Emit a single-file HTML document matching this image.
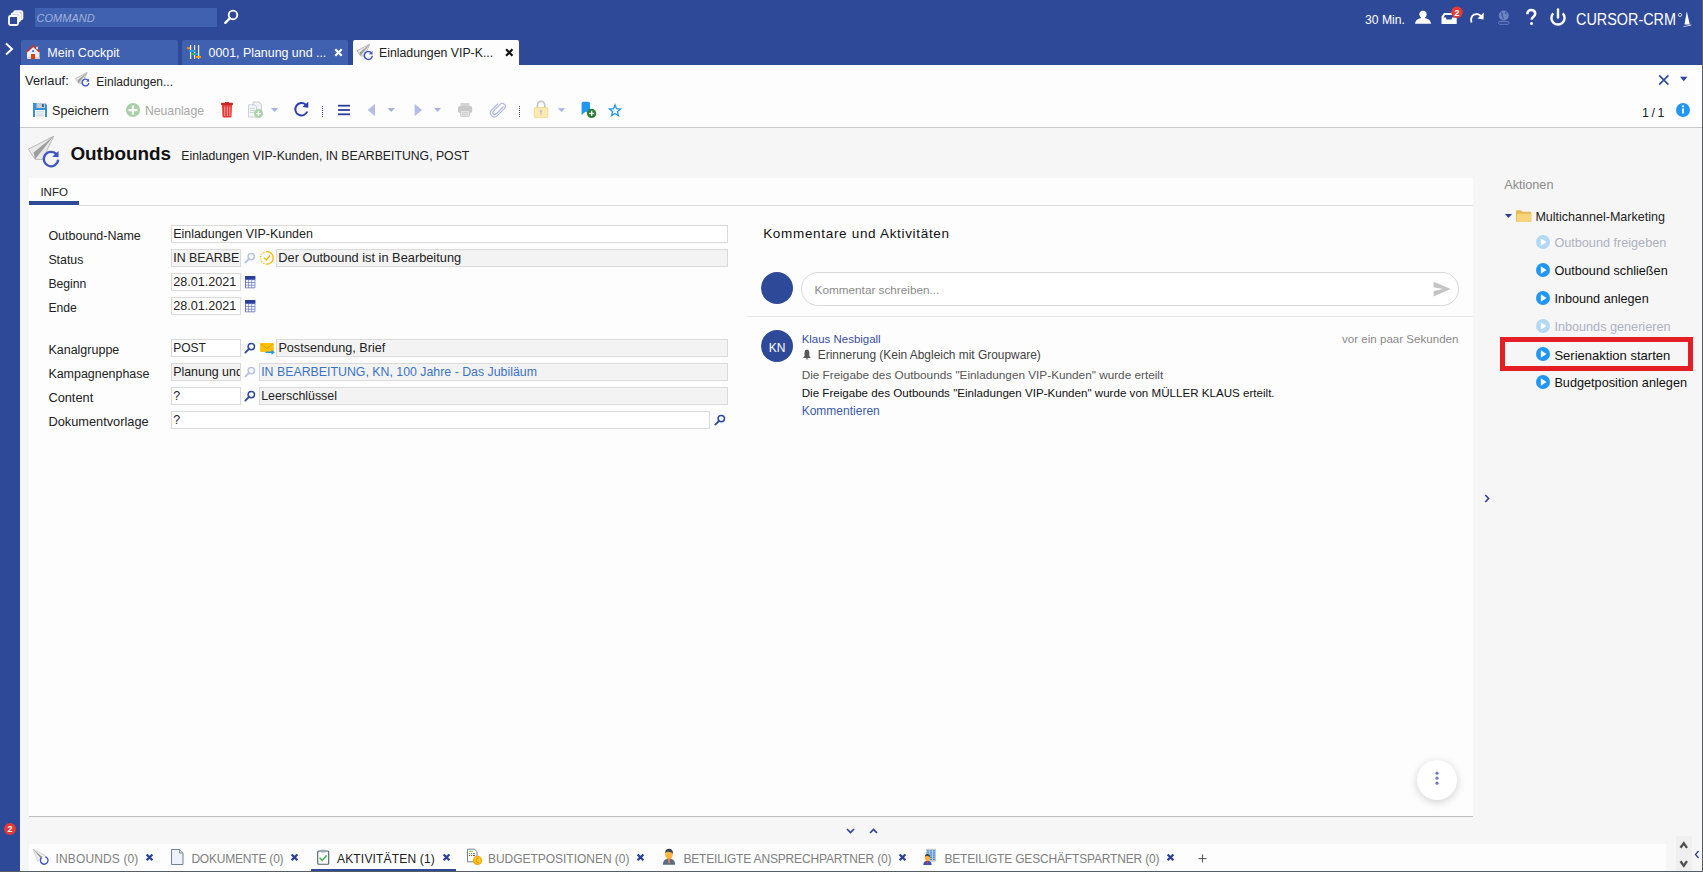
<!DOCTYPE html>
<html><head><meta charset="utf-8"><style>
html,body{margin:0;padding:0;width:1703px;height:872px;overflow:hidden;background:#f6f6f6}
body{position:relative;font-family:'Liberation Sans', sans-serif}
.t{position:absolute;white-space:pre;line-height:1;font-family:'Liberation Sans', sans-serif}
svg{overflow:visible}
</style></head><body>
<div style="position:absolute;left:0px;top:0px;width:1703px;height:65px;background:#2e4998"></div><div style="position:absolute;left:0px;top:65px;width:20px;height:807px;background:#2e4998"></div><div style="position:absolute;left:20px;top:65px;width:1683px;height:63px;background:#fdfdfd"></div><div style="position:absolute;left:20px;top:127px;width:1683px;height:1px;background:#c9c9c9"></div><div style="position:absolute;left:20px;top:128px;width:1683px;height:744px;background:#f6f6f6"></div><div style="position:absolute;left:29px;top:178px;width:1444px;height:638px;background:#fdfdfd"></div><div style="position:absolute;left:29px;top:816px;width:1444px;height:1px;background:#bdbdbd"></div><div style="position:absolute;left:29px;top:844px;width:1637px;height:27px;background:#fdfdfd"></div><div style="position:absolute;left:1676px;top:836px;width:16px;height:35px;background:#efefef"></div><div style="position:absolute;left:1702px;top:0px;width:1px;height:872px;background:#585c63"></div><div style="position:absolute;left:0px;top:871px;width:1703px;height:1px;background:#585c63"></div><div style="position:absolute;left:35px;top:8px;width:182px;height:19px;background:#4060b0"></div><div class="t" style="left:36.6px;top:12.69px;font-size:11px;color:#9fb0dc;font-style:italic">COMMAND</div><div class="t" style="left:1365px;top:13.67px;font-size:12.2px;color:#fff;">30 Min.</div><div class="t" style="left:1575.7px;top:12.06px;font-size:16px;color:#fff;transform:scaleX(0.9);transform-origin:left">CURSOR-CRM</div><div style="position:absolute;left:21px;top:40px;width:157px;height:25px;background:#4060b0;border-radius:2px 2px 0 0"></div><div style="position:absolute;left:182px;top:40px;width:166px;height:25px;background:#4060b0;border-radius:2px 2px 0 0"></div><div style="position:absolute;left:353px;top:40px;width:166px;height:25px;background:#fdfdfd;border-radius:2px 2px 0 0"></div><div class="t" style="left:47.3px;top:46.82px;font-size:12.5px;color:#fff;">Mein Cockpit</div><div class="t" style="left:208.5px;top:46.90px;font-size:12.4px;color:#fff;">0001, Planung und ...</div><div class="t" style="left:379px;top:46.99px;font-size:12.3px;color:#222;">Einladungen VIP-K...</div><div class="t" style="left:25px;top:74.88px;font-size:12.9px;color:#222;">Verlauf:</div><div class="t" style="left:96.3px;top:75.64px;font-size:12.0px;color:#222;">Einladungen...</div><div class="t" style="left:52px;top:105.13px;font-size:12.6px;color:#222;">Speichern</div><div class="t" style="left:145px;top:105.47px;font-size:12.2px;color:#a8a8a8;">Neuanlage</div><div class="t" style="left:1642px;top:106.50px;font-size:12.4px;color:#222;letter-spacing:2.6px">1/1</div><div class="t" style="left:70.4px;top:144.60px;font-size:18.9px;color:#111;font-weight:bold">Outbounds</div><div class="t" style="left:181.3px;top:150.23px;font-size:12.25px;color:#222;">Einladungen VIP-Kunden, IN BEARBEITUNG, POST</div><div class="t" style="left:40.4px;top:187.02px;font-size:11.55px;color:#222;">INFO</div><div style="position:absolute;left:29px;top:201px;width:50px;height:4px;background:#2e4998"></div><div style="position:absolute;left:79px;top:205px;width:1394px;height:1px;background:#dcdcdc"></div><div class="t" style="left:48.4px;top:230.22px;font-size:12.5px;color:#222;">Outbound-Name</div><div class="t" style="left:48.4px;top:254.35px;font-size:12.35px;color:#222;">Status</div><div class="t" style="left:48.4px;top:278.47px;font-size:12.2px;color:#222;">Beginn</div><div class="t" style="left:48.4px;top:302.47px;font-size:12.2px;color:#222;">Ende</div><div class="t" style="left:48.4px;top:344.22px;font-size:12.5px;color:#222;">Kanalgruppe</div><div class="t" style="left:48.4px;top:368.27px;font-size:12.44px;color:#222;">Kampagnenphase</div><div class="t" style="left:48.4px;top:391.96px;font-size:12.8px;color:#222;">Content</div><div class="t" style="left:48.4px;top:415.96px;font-size:12.8px;color:#222;">Dokumentvorlage</div><div style="position:absolute;left:171px;top:225px;width:555px;height:16px;background:#fff;border:1px solid #dadada"></div><div style="position:absolute;left:171px;top:249px;width:68px;height:16px;background:#f3f3f3;border:1px solid #dadada"></div><div style="position:absolute;left:276px;top:249px;width:450px;height:16px;background:#f3f3f3;border:1px solid #dadada"></div><div style="position:absolute;left:171px;top:273px;width:68px;height:16px;background:#fff;border:1px solid #dadada"></div><div style="position:absolute;left:171px;top:297px;width:68px;height:16px;background:#fff;border:1px solid #dadada"></div><div style="position:absolute;left:171px;top:339px;width:68px;height:16px;background:#fff;border:1px solid #dadada"></div><div style="position:absolute;left:276px;top:339px;width:450px;height:16px;background:#f3f3f3;border:1px solid #dadada"></div><div style="position:absolute;left:171px;top:363px;width:68px;height:16px;background:#f3f3f3;border:1px solid #dadada"></div><div style="position:absolute;left:259px;top:363px;width:467px;height:16px;background:#f3f3f3;border:1px solid #dadada"></div><div style="position:absolute;left:171px;top:387px;width:68px;height:16px;background:#fff;border:1px solid #dadada"></div><div style="position:absolute;left:259px;top:387px;width:467px;height:16px;background:#f3f3f3;border:1px solid #dadada"></div><div style="position:absolute;left:171px;top:411px;width:537px;height:16px;background:#fff;border:1px solid #dadada"></div><div class="t" style="left:173.2px;top:228.26px;font-size:12.45px;color:#222;">Einladungen VIP-Kunden</div><div class="t" style="left:278.3px;top:251.96px;font-size:12.8px;color:#222;">Der Outbound ist in Bearbeitung</div><div class="t" style="left:173.2px;top:276.13px;font-size:12.6px;color:#222;">28.01.2021</div><div class="t" style="left:173.2px;top:300.13px;font-size:12.6px;color:#222;">28.01.2021</div><div class="t" style="left:173.2px;top:342.14px;font-size:12.0px;color:#222;">POST</div><div class="t" style="left:278.4px;top:342.08px;font-size:12.66px;color:#222;">Postsendung, Brief</div><div class="t" style="left:261.2px;top:366.35px;font-size:12.35px;color:#3b73c4;">IN BEARBEITUNG, KN, 100 Jahre - Das Jubiläum</div><div class="t" style="left:261.2px;top:390.30px;font-size:12.4px;color:#222;">Leerschlüssel</div><div class="t" style="left:173.2px;top:390.30px;font-size:12.4px;color:#222;">?</div><div class="t" style="left:173.2px;top:414.30px;font-size:12.4px;color:#222;">?</div><div style="position:absolute;left:172px;top:250px;width:68px;height:16px;overflow:hidden"><div class="t" style="left:1.2px;top:1.5px;font-size:12.4px;color:#222">IN BEARBEITUNG</div></div><div style="position:absolute;left:172px;top:364px;width:68px;height:16px;overflow:hidden"><div class="t" style="left:1.2px;top:1.5px;font-size:12.4px;color:#222">Planung und Vorbereitung</div></div><div class="t" style="left:763.2px;top:227.37px;font-size:13.5px;color:#111;letter-spacing:0.68px">Kommentare und Aktivitäten</div><div style="position:absolute;left:761px;top:272px;width:32px;height:32px;border-radius:50%;background:#2e4998"></div><div style="position:absolute;left:801px;top:272px;width:656px;height:32px;border-radius:17px;background:#fff;border:1px solid #d8d8d8"></div><div class="t" style="left:814.6px;top:284.25px;font-size:11.76px;color:#8a8a8a;">Kommentar schreiben...</div><div style="position:absolute;left:747px;top:316px;width:726px;height:1px;background:#e8e8e8"></div><div style="position:absolute;left:761px;top:330px;width:32px;height:32px;border-radius:50%;background:#2e4998;color:#fff;font-family:'Liberation Sans', sans-serif;font-size:12px;line-height:36px;text-align:center">KN</div><div class="t" style="left:801.7px;top:333.70px;font-size:11.46px;color:#3a4f9f;">Klaus Nesbigall</div><div class="t" style="right:244.5px;top:333.60px;font-size:11.58px;color:#8a8a8a;">vor ein paar Sekunden</div><div class="t" style="left:817.8px;top:349.52px;font-size:11.91px;color:#444;">Erinnerung (Kein Abgleich mit Groupware)</div><div class="t" style="left:801.7px;top:369.43px;font-size:11.78px;color:#555;">Die Freigabe des Outbounds "Einladungen VIP-Kunden" wurde erteilt</div><div class="t" style="left:801.7px;top:387.48px;font-size:11.6px;color:#111;">Die Freigabe des Outbounds "Einladungen VIP-Kunden" wurde von MÜLLER KLAUS erteilt.</div><div class="t" style="left:801.7px;top:405.44px;font-size:12.0px;color:#3a5aa8;">Kommentieren</div><div style="position:absolute;left:1417px;top:760px;width:40px;height:40px;border-radius:50%;background:#fff;box-shadow:0 2px 8px rgba(0,0,0,0.18)"></div><div class="t" style="left:1504.2px;top:179.17px;font-size:12.67px;color:#8a8a8a;">Aktionen</div><div class="t" style="left:1535.4px;top:210.68px;font-size:12.54px;color:#222;">Multichannel-Marketing</div><div class="t" style="left:1554.4px;top:236.77px;font-size:12.67px;color:#aeb1c2;">Outbound freigeben</div><div class="t" style="left:1554.4px;top:264.77px;font-size:12.67px;color:#111;">Outbound schließen</div><div class="t" style="left:1554.4px;top:292.77px;font-size:12.67px;color:#111;">Inbound anlegen</div><div class="t" style="left:1554.4px;top:320.77px;font-size:12.67px;color:#aeb1c2;">Inbounds generieren</div><div class="t" style="left:1554.4px;top:348.76px;font-size:13.04px;color:#111;">Serienaktion starten</div><div class="t" style="left:1554.4px;top:377.06px;font-size:12.69px;color:#111;">Budgetposition anlegen</div><div style="position:absolute;left:1500px;top:337px;width:183px;height:24px;border:5px solid #e31e24"></div><div class="t" style="left:55.5px;top:852.64px;font-size:12.0px;color:#808080;letter-spacing:0.139px">INBOUNDS (0)</div><div class="t" style="left:191.4px;top:852.64px;font-size:12.0px;color:#808080;letter-spacing:-0.205px">DOKUMENTE (0)</div><div class="t" style="left:337px;top:852.64px;font-size:12.0px;color:#222;letter-spacing:0.177px">AKTIVITÄTEN (1)</div><div class="t" style="left:488px;top:852.64px;font-size:12.0px;color:#808080;letter-spacing:-0.031px">BUDGETPOSITIONEN (0)</div><div class="t" style="left:683.4px;top:852.64px;font-size:12.0px;color:#808080;letter-spacing:-0.165px">BETEILIGTE ANSPRECHPARTNER (0)</div><div class="t" style="left:944.4px;top:852.64px;font-size:12.0px;color:#808080;letter-spacing:-0.170px">BETEILIGTE GESCHÄFTSPARTNER (0)</div><div style="position:absolute;left:311px;top:869px;width:145px;height:2px;background:#2e4998"></div><svg style="position:absolute;left:0px;top:0px" width="40" height="40" viewBox="0 0 40 40"><rect x="14" y="11" width="8.5" height="8.5" rx="1.5" fill="#c5cce6" stroke="#fff" stroke-width="1.6"/>
<rect x="11.5" y="13.3" width="8.5" height="8.5" rx="1.5" fill="#c5cce6" stroke="#fff" stroke-width="1.6"/>
<rect x="9" y="16" width="9" height="9" rx="1.5" fill="#2e4998" stroke="#fff" stroke-width="1.8"/></svg><svg style="position:absolute;left:215px;top:0px" width="30" height="35" viewBox="215 0 30 35"><circle cx="233" cy="14.9" r="4.3" fill="none" stroke="#fff" stroke-width="1.9"/>
<line x1="229.8" y1="18.3" x2="225.3" y2="22.8" stroke="#fff" stroke-width="2.4" stroke-linecap="round"/></svg><svg style="position:absolute;left:0px;top:35px" width="20" height="25" viewBox="0 35 20 25"><polyline points="6,43.5 12,49 6,54.5" fill="none" stroke="#fff" stroke-width="2"/></svg><svg style="position:absolute;left:1405px;top:0px" width="35" height="35" viewBox="1405 0 35 35"><circle cx="1423" cy="14.3" r="3.6" fill="#fff"/>
<path d="M1415 23.7 C1415.5 20 1418 18.6 1420.5 18.2 L1425.5 18.2 C1428 18.6 1430.5 20 1431 23.7 Z" fill="#fff"/>
<rect x="1421" y="16" width="4" height="3" fill="#fff"/></svg><svg style="position:absolute;left:1438px;top:0px" width="28" height="30" viewBox="1438 0 28 30"><path d="M1441.5 16.5 L1444 13 L1452 13 L1452 15 L1445 15 L1443.5 17.5 L1446 17.5 L1446.5 19.5 L1451.5 19.5 L1452 17.5 L1456.7 17.5 L1456.7 23.9 L1441.5 23.9 Z" fill="#fff"/>
<circle cx="1457" cy="12.2" r="5.8" fill="#e53935"/>
<text x="1457" y="15.8" font-family="Liberation Sans" font-weight="bold" font-size="9.5" fill="#fff" text-anchor="middle">2</text></svg><svg style="position:absolute;left:1466px;top:0px" width="24" height="30" viewBox="1466 0 24 30"><path d="M1471.5 22.5 C1470 17 1473 13.5 1477.5 14.2 C1479 14.5 1480 15.2 1480.8 16" fill="none" stroke="#fff" stroke-width="1.8"/>
<polygon points="1483.8,12.5 1483.5,19.5 1477.5,18.5" fill="#fff"/></svg><svg style="position:absolute;left:1495px;top:5px" width="17" height="23" viewBox="1495 5 17 23"><circle cx="1503.8" cy="15.5" r="5" fill="#6d84c4"/>
<path d="M1501 12 q2 2 1 4 q2 1 1 3 M1506 11.5 q-1 2 1 3" stroke="#2e4998" stroke-width="1" fill="none"/>
<rect x="1498.5" y="21.5" width="10.5" height="2.8" rx="1.2" fill="none" stroke="#6d84c4" stroke-width="0.9"/></svg><svg style="position:absolute;left:1522px;top:5px" width="18" height="23" viewBox="1522 5 18 23"><path d="M1527.3 14.3 C1527.3 11.4 1529.2 10 1531 10 C1533.5 10 1535.2 11.6 1535.2 13.8 C1535.2 16.5 1532 17 1531.6 19.6" fill="none" stroke="#fff" stroke-width="2.6"/>
<circle cx="1531.5" cy="23.4" r="1.5" fill="#fff"/></svg><svg style="position:absolute;left:1545px;top:3px" width="27" height="27" viewBox="1545 3 27 27"><path d="M1553.3 13.3 A6.6 6.6 0 1 0 1562.7 13.3" fill="none" stroke="#fff" stroke-width="2.4"/>
<line x1="1558" y1="9.5" x2="1558" y2="17.5" stroke="#fff" stroke-width="2.4" stroke-linecap="round"/></svg><svg style="position:absolute;left:1676px;top:8px" width="19" height="22" viewBox="1676 8 19 22"><circle cx="1680" cy="14.9" r="1.6" fill="none" stroke="#dfe5f5" stroke-width="0.9"/>
<path d="M1686.8 11.3 L1684.5 24.5 L1689.8 24.5 Z" fill="#fff"/>
<path d="M1683.2 26.5 L1691.5 24.5 L1691 25.5 L1683.2 26.9 Z" fill="#fff"/></svg><svg style="position:absolute;left:22px;top:40px" width="23" height="24" viewBox="22 40 23 24"><rect x="27" y="51" width="12.5" height="8" fill="#eceef8"/>
<rect x="27" y="57" width="12.5" height="2" fill="#d0d5ea"/>
<polygon points="33.2,47 38.5,51.8 27.8,51.8" fill="#eceef8"/>
<polyline points="26.5,52 33.2,45.6 39.7,52" fill="none" stroke="#c0392b" stroke-width="1.6"/>
<rect x="36.2" y="46.7" width="1.7" height="2.6" fill="#eceef8"/>
<rect x="31" y="54" width="4" height="5" fill="#e0400f"/>
<rect x="32.3" y="50.3" width="1.6" height="1.6" fill="#0d47a1"/></svg><svg style="position:absolute;left:182px;top:40px" width="28" height="24" viewBox="182 40 28 24"><rect x="190" y="45" width="1.2" height="14" fill="#eee"/>
<rect x="194" y="45" width="1.2" height="14" fill="#eee"/>
<rect x="198" y="45" width="1.2" height="14" fill="#eee"/>
<rect x="187" y="47.2" width="3" height="2" fill="#ff8c1a"/>
<rect x="189" y="50" width="6" height="2" fill="#1e9bff"/>
<rect x="191" y="53" width="4" height="2" fill="#3ab54a"/>
<rect x="195" y="53" width="3" height="2" fill="#1e9bff"/>
<rect x="196" y="56" width="5" height="2" fill="#ff9800"/></svg><svg style="position:absolute;left:354px;top:40px" width="30" height="24" viewBox="354 40 30 24"><polygon points="369.95,44.10 357.00,50.73 360.37,55.93 364.14,56.03" fill="#e9e9e9" stroke="#a9a9a9" stroke-width="0.75"/><polygon points="369.95,44.10 359.65,52.52 360.37,55.93" fill="#9e9e9e"/><path d="M371.50 53.00 A4 4 0 1 0 372.30 55.80" fill="none" stroke="#3f56c4" stroke-width="1.5"/><polygon points="372.50,51.00 372.50,54.40 368.90,54.20" fill="#3f56c4"/></svg><svg style="position:absolute;left:330px;top:44px" width="16" height="18" viewBox="330 44 16 18"><path d="M335.3 49.3 L341.7 55.7 M341.7 49.3 L335.3 55.7" stroke="#fff" stroke-width="2.2" stroke-linecap="butt"/></svg><svg style="position:absolute;left:500px;top:44px" width="18" height="18" viewBox="500 44 18 18"><path d="M506.1 49.3 L512.5 55.7 M512.5 49.3 L506.1 55.7" stroke="#111" stroke-width="2.2" stroke-linecap="butt"/></svg><svg style="position:absolute;left:70px;top:66px" width="26" height="26" viewBox="70 66 26 26"><polygon points="87.18,72.50 75.50,78.48 78.54,83.17 81.94,83.26" fill="#e9e9e9" stroke="#a9a9a9" stroke-width="0.75"/><polygon points="87.18,72.50 77.89,80.09 78.54,83.17" fill="#9e9e9e"/><path d="M88.22 80.46 A3.4 3.4 0 1 0 88.90 82.84" fill="none" stroke="#3f56c4" stroke-width="1.3"/><polygon points="89.07,78.76 89.07,81.65 86.01,81.48" fill="#3f56c4"/></svg><svg style="position:absolute;left:1650px;top:68px" width="45" height="24" viewBox="1650 68 45 24"><path d="M1659.2 75.4 L1668.3999999999999 84.6 M1668.3999999999999 75.4 L1659.2 84.6" stroke="#2e4aa0" stroke-width="1.6" stroke-linecap="butt"/><polygon points="1680,76.8 1687.5,76.8 1683.75,81.3" fill="#2e4aa0"/></svg><svg style="position:absolute;left:1670px;top:98px" width="25" height="24" viewBox="1670 98 25 24"><circle cx="1683" cy="110" r="7" fill="#2196f3"/><rect x="1682.1" y="108.5" width="1.8" height="5" fill="#fff"/><circle cx="1683" cy="106.3" r="1.1" fill="#fff"/></svg><svg style="position:absolute;left:30px;top:100px" width="20" height="20" viewBox="30 100 20 20"><path d="M33 103 L45 103 L47 105 L47 117 L33 117 Z" fill="#3a8fd9"/>
<rect x="36.5" y="103" width="8.5" height="5" fill="#c6ccd6"/><rect x="42" y="104" width="1.8" height="3" fill="#2a5f9a"/>
<rect x="35" y="110" width="10" height="7" fill="#fff"/>
<rect x="36" y="111.5" width="8" height="0.8" fill="#b5bcc8"/><rect x="36" y="113.5" width="8" height="0.8" fill="#b5bcc8"/><rect x="36" y="115.5" width="8" height="0.8" fill="#b5bcc8"/></svg><svg style="position:absolute;left:124px;top:101px" width="18" height="18" viewBox="124 101 18 18"><circle cx="133" cy="110" r="7" fill="#a9cfa9"/><rect x="128.5" y="109" width="9" height="2.2" fill="#fff"/><rect x="131.9" y="105.5" width="2.2" height="9" fill="#fff"/></svg><svg style="position:absolute;left:218px;top:100px" width="18" height="20" viewBox="218 100 18 20"><rect x="221" y="102.8" width="12" height="2.4" rx="1" fill="#c62828"/><rect x="225" y="102" width="4" height="1.2" fill="#c62828"/>
<path d="M222 105 L232 105 L231.5 116.5 Q231.3 117.6 230 117.6 L224 117.6 Q222.7 117.6 222.5 116.5 Z" fill="#e53935"/>
<rect x="224.3" y="106.5" width="1" height="9.5" fill="#f6a09e"/><rect x="226.8" y="106.5" width="1" height="9.5" fill="#f6a09e"/><rect x="229.3" y="106.5" width="1" height="9.5" fill="#f6a09e"/></svg><svg style="position:absolute;left:246px;top:100px" width="19" height="20" viewBox="246 100 19 20"><path d="M253 102 L259 102 L261.5 104.5 L261.5 113 L253 113 Z" fill="#eef1f4" stroke="#c5cdd4" stroke-width="0.9"/>
<path d="M248.5 104.8 L254.5 104.8 L256.5 106.8 L256.5 117 L248.5 117 Z" fill="#f3f5f7" stroke="#c5cdd4" stroke-width="0.9"/>
<rect x="250" y="108" width="4.5" height="0.8" fill="#c5cdd4"/><rect x="250" y="110" width="4.5" height="0.8" fill="#c5cdd4"/><rect x="250" y="112" width="4.5" height="0.8" fill="#c5cdd4"/>
<circle cx="258.5" cy="113.5" r="4.5" fill="#a9d4a9"/><rect x="256" y="113" width="5" height="1.2" fill="#fff"/><rect x="257.9" y="111" width="1.2" height="5" fill="#fff"/></svg><svg style="position:absolute;left:268px;top:104px" width="14" height="11" viewBox="268 104 14 11"><polygon points="271,108 278.2,108 274.6,112" fill="#aab2dc"/></svg><svg style="position:absolute;left:290px;top:98px" width="22" height="23" viewBox="290 98 22 23"><path d="M305.8 104.8 A6.2 6.2 0 1 0 307.3 111.5" fill="none" stroke="#2d3fb0" stroke-width="2"/>
<polygon points="308.3,101.8 308.3,107.8 302.3,107" fill="#2d3fb0"/></svg><svg style="position:absolute;left:318px;top:102px" width="8" height="18" viewBox="318 102 8 18"><rect x="322" y="106" width="1" height="1" fill="#2e3f9a"/><rect x="322" y="108" width="1" height="1" fill="#2e3f9a"/><rect x="322" y="110" width="1" height="1" fill="#2e3f9a"/><rect x="322" y="112" width="1" height="1" fill="#2e3f9a"/><rect x="322" y="114" width="1" height="1" fill="#2e3f9a"/><rect x="322" y="116" width="1" height="1" fill="#2e3f9a"/></svg><svg style="position:absolute;left:515px;top:102px" width="8" height="18" viewBox="515 102 8 18"><rect x="519" y="106" width="1" height="1" fill="#2e3f9a"/><rect x="519" y="108" width="1" height="1" fill="#2e3f9a"/><rect x="519" y="110" width="1" height="1" fill="#2e3f9a"/><rect x="519" y="112" width="1" height="1" fill="#2e3f9a"/><rect x="519" y="114" width="1" height="1" fill="#2e3f9a"/><rect x="519" y="116" width="1" height="1" fill="#2e3f9a"/></svg><svg style="position:absolute;left:335px;top:100px" width="18" height="20" viewBox="335 100 18 20"><rect x="338" y="104.8" width="12" height="1.8" fill="#2e3f9a"/><rect x="338" y="109.1" width="12" height="1.8" fill="#2e3f9a"/><rect x="338" y="113.4" width="12" height="1.8" fill="#2e3f9a"/></svg><svg style="position:absolute;left:364px;top:100px" width="81" height="20" viewBox="364 100 81 20"><polygon points="375,103.8 375,116.2 367.7,110" fill="#b5bde6"/><polygon points="387.5,108 395,108 391.25,112" fill="#aab2dc"/><polygon points="414.6,103.8 414.6,116.2 422,110" fill="#b5bde6"/><polygon points="434,108 441,108 437.5,112" fill="#aab2dc"/></svg><svg style="position:absolute;left:455px;top:100px" width="20" height="20" viewBox="455 100 20 20"><rect x="460.5" y="103" width="9" height="3.5" rx="0.8" fill="#d4d4d4"/>
<rect x="458" y="106" width="14.2" height="7" rx="2" fill="#c8c8c8"/>
<rect x="460.5" y="110.5" width="9" height="6" rx="0.8" fill="#e3e3e3" stroke="#c8c8c8" stroke-width="0.8"/>
<rect x="462" y="112.5" width="6" height="0.7" fill="#c0c0c0"/><rect x="462" y="114.5" width="6" height="0.7" fill="#c0c0c0"/></svg><svg style="position:absolute;left:488px;top:99px" width="21" height="22" viewBox="488 99 21 22"><g transform="rotate(45 498 110)"><path d="M499.5 104 L499.5 113.5 Q499.5 116 497.5 116 Q495.5 116 495.5 113.5 L495.5 104.5 Q495.5 101.5 498.5 101.5 Q501.5 101.5 501.5 104.5 L501.5 114.5 Q501.5 118.5 497.5 118.5 Q493.5 118.5 493.5 114.5 L493.5 106" fill="none" stroke="#b3b9e6" stroke-width="1.2" stroke-linecap="round"/></g></svg><svg style="position:absolute;left:531px;top:99px" width="20" height="21" viewBox="531 99 20 21"><path d="M537.5 108 L537.5 105 A3.6 3.6 0 0 1 544.7 105 L544.7 108" fill="none" stroke="#c2c6cc" stroke-width="1.7"/>
<rect x="534.3" y="107.5" width="13.5" height="10.2" rx="1.2" fill="#fbe9b0" stroke="#eed58a" stroke-width="0.8"/>
<circle cx="541" cy="111" r="1.3" fill="#c2c6cc"/><rect x="540.4" y="111" width="1.2" height="4.3" fill="#c2c6cc"/></svg><svg style="position:absolute;left:554px;top:104px" width="14" height="11" viewBox="554 104 14 11"><polygon points="557.8,108.2 565.2,108.2 561.5,112" fill="#aab2dc"/></svg><svg style="position:absolute;left:578px;top:98px" width="20" height="22" viewBox="578 98 20 22"><path d="M581.6 103.5 Q581.6 101.8 583.3 101.8 L588.3 101.8 Q590 101.8 590 103.5 L590 115 L585.8 111.5 L581.6 115 Z" fill="#2196f3"/>
<circle cx="591.6" cy="113.4" r="4.6" fill="#2e7d32"/><rect x="589" y="112.8" width="5.2" height="1.3" fill="#fff"/><rect x="591" y="110.8" width="1.3" height="5.2" fill="#fff"/></svg><svg style="position:absolute;left:605px;top:100px" width="20" height="20" viewBox="605 100 20 20"><polygon points="615.00,104.90 616.53,108.70 620.61,108.98 617.47,111.60 618.47,115.57 615.00,113.40 611.53,115.57 612.53,111.60 609.39,108.98 613.47,108.70" fill="none" stroke="#2196f3" stroke-width="1.3" stroke-linejoin="miter"/></svg><svg style="position:absolute;left:24px;top:132px" width="40" height="40" viewBox="24 132 40 40"><polygon points="53.80,136.10 28.40,149.10 35.00,159.30 42.40,159.50" fill="#e9e9e9" stroke="#a9a9a9" stroke-width="0.75"/><polygon points="53.80,136.10 33.60,152.60 35.00,159.30" fill="#9e9e9e"/><path d="M56.76 154.68 A7.2 7.2 0 1 0 58.20 159.72" fill="none" stroke="#3f56c4" stroke-width="2.3"/><polygon points="58.56,151.08 58.56,157.20 52.08,156.84" fill="#3f56c4"/></svg><svg style="position:absolute;left:240px;top:248px" width="18" height="20" viewBox="240 248 18 20"><circle cx="251.3" cy="256.6" r="3.2" fill="none" stroke="#b9c1e2" stroke-width="1.5"/><line x1="248.9" y1="259.0" x2="245.3" y2="262.6" stroke="#b9c1e2" stroke-width="1.8" stroke-linecap="round"/></svg><svg style="position:absolute;left:240px;top:338px" width="18" height="20" viewBox="240 338 18 20"><circle cx="251.3" cy="346.6" r="3.2" fill="none" stroke="#2e4aa0" stroke-width="1.5"/><line x1="248.9" y1="349.0" x2="245.3" y2="352.6" stroke="#2e4aa0" stroke-width="1.8" stroke-linecap="round"/></svg><svg style="position:absolute;left:240px;top:362px" width="18" height="20" viewBox="240 362 18 20"><circle cx="251.3" cy="370.6" r="3.2" fill="none" stroke="#b9c1e2" stroke-width="1.5"/><line x1="248.9" y1="373.0" x2="245.3" y2="376.6" stroke="#b9c1e2" stroke-width="1.8" stroke-linecap="round"/></svg><svg style="position:absolute;left:240px;top:386px" width="18" height="20" viewBox="240 386 18 20"><circle cx="251.3" cy="394.6" r="3.2" fill="none" stroke="#2e4aa0" stroke-width="1.5"/><line x1="248.9" y1="397.0" x2="245.3" y2="400.6" stroke="#2e4aa0" stroke-width="1.8" stroke-linecap="round"/></svg><svg style="position:absolute;left:710px;top:410px" width="18" height="20" viewBox="710 410 18 20"><circle cx="721.3" cy="418.6" r="3.2" fill="none" stroke="#2e4aa0" stroke-width="1.5"/><line x1="718.9" y1="421.0" x2="715.3" y2="424.6" stroke="#2e4aa0" stroke-width="1.8" stroke-linecap="round"/></svg><svg style="position:absolute;left:258px;top:249px" width="18" height="18" viewBox="258 249 18 18"><path d="M266.9 251.6 A6.3 6.3 0 0 1 266.9 264.2" fill="none" stroke="#f5b800" stroke-width="1.3"/>
<path d="M266.9 264.2 A6.3 6.3 0 0 1 266.9 251.6" fill="none" stroke="#f5b800" stroke-width="1.3" stroke-dasharray="1.2 1.4"/>
<polyline points="264,257.8 266.3,260 270.2,255.5" fill="none" stroke="#f5b800" stroke-width="1.4"/></svg><svg style="position:absolute;left:243px;top:272px" width="15" height="20" viewBox="243 272 15 20"><rect x="245" y="276" width="10.3" height="12.2" rx="0.8" fill="#5a6fbf"/><rect x="245" y="276" width="10.3" height="3.2" fill="#2e3f9a"/><rect x="245.90" y="280.10" width="2.5" height="2" fill="#fafbff"/><rect x="249.00" y="280.10" width="2.5" height="2" fill="#fafbff"/><rect x="252.10" y="280.10" width="2.5" height="2" fill="#fafbff"/><rect x="245.90" y="282.80" width="2.5" height="2" fill="#fafbff"/><rect x="249.00" y="282.80" width="2.5" height="2" fill="#fafbff"/><rect x="252.10" y="282.80" width="2.5" height="2" fill="#fafbff"/><rect x="245.90" y="285.50" width="2.5" height="2" fill="#fafbff"/><rect x="249.00" y="285.50" width="2.5" height="2" fill="#fafbff"/><rect x="252.10" y="285.50" width="2.5" height="2" fill="#fafbff"/></svg><svg style="position:absolute;left:243px;top:296px" width="15" height="20" viewBox="243 296 15 20"><rect x="245" y="300" width="10.3" height="12.2" rx="0.8" fill="#5a6fbf"/><rect x="245" y="300" width="10.3" height="3.2" fill="#2e3f9a"/><rect x="245.90" y="304.10" width="2.5" height="2" fill="#fafbff"/><rect x="249.00" y="304.10" width="2.5" height="2" fill="#fafbff"/><rect x="252.10" y="304.10" width="2.5" height="2" fill="#fafbff"/><rect x="245.90" y="306.80" width="2.5" height="2" fill="#fafbff"/><rect x="249.00" y="306.80" width="2.5" height="2" fill="#fafbff"/><rect x="252.10" y="306.80" width="2.5" height="2" fill="#fafbff"/><rect x="245.90" y="309.50" width="2.5" height="2" fill="#fafbff"/><rect x="249.00" y="309.50" width="2.5" height="2" fill="#fafbff"/><rect x="252.10" y="309.50" width="2.5" height="2" fill="#fafbff"/></svg><svg style="position:absolute;left:258px;top:340px" width="19" height="17" viewBox="258 340 19 17"><rect x="260" y="343.1" width="13.8" height="9" rx="1.2" fill="#ffc107"/>
<polyline points="260.8,343.8 266.9,348.5 273,343.8" fill="none" stroke="#d99a00" stroke-width="0.8"/>
<line x1="265.5" y1="352.3" x2="272.5" y2="352.3" stroke="#2196f3" stroke-width="1.5"/>
<polygon points="271.5,349.8 274.8,352.3 271.5,354.8" fill="#2196f3"/></svg><svg style="position:absolute;left:1430px;top:278px" width="24" height="22" viewBox="1430 278 24 22"><polygon points="1433.6,281.8 1450.8,289.1 1433.6,296.5 1433.6,291 1443,289.1 1433.6,287.3" fill="#c4c4c4"/></svg><svg style="position:absolute;left:800px;top:346px" width="14" height="16" viewBox="800 346 14 16"><path d="M803 358 L804.5 356 L804.5 352 Q804.5 349.6 806.9 349.4 Q809.3 349.6 809.3 352 L809.3 356 L810.8 358 Z" fill="#5a5a5a"/>
<rect x="805.9" y="358.3" width="2" height="1" fill="#5a5a5a"/></svg><svg style="position:absolute;left:1430px;top:768px" width="14" height="20" viewBox="1430 768 14 20"><circle cx="1437" cy="773.2" r="1.6" fill="#6f7eb6"/><circle cx="1437" cy="778.2" r="1.6" fill="#6f7eb6"/><circle cx="1437" cy="783.2" r="1.6" fill="#6f7eb6"/></svg><svg style="position:absolute;left:1480px;top:490px" width="15" height="18" viewBox="1480 490 15 18"><polyline points="1485.3,495 1488.6,498.5 1485.3,502" fill="none" stroke="#2e3f9a" stroke-width="1.6"/></svg><svg style="position:absolute;left:1500px;top:205px" width="35" height="20" viewBox="1500 205 35 20"><polygon points="1504.9,213.9 1512,213.9 1508.45,218" fill="#2e3f9a"/><path d="M1516 211 Q1516 210.2 1516.8 210.2 L1521 210.2 L1522.5 211.8 L1530.5 211.8 Q1531.3 211.8 1531.3 212.6 L1531.3 221 Q1531.3 221.9 1530.5 221.9 L1516.8 221.9 Q1516 221.9 1516 221 Z" fill="#e5b95a"/>
<path d="M1517 214.5 Q1517 213.7 1517.8 213.7 L1531 213.7 Q1531.9 213.7 1531.7 214.5 L1530.9 221 Q1530.8 221.9 1530 221.9 L1516.8 221.9 Z" fill="#f7d47a"/></svg><svg style="position:absolute;left:1533px;top:232px" width="20" height="160" viewBox="1533 232 20 160"><circle cx="1543" cy="242" r="7" fill="#b3d8f6"/><polygon points="1540.8,238.2 1540.8,245.8 1546.5,242" fill="#fff"/><circle cx="1543" cy="270" r="7" fill="#2196f3"/><polygon points="1540.8,266.2 1540.8,273.8 1546.5,270" fill="#fff"/><circle cx="1543" cy="298" r="7" fill="#2196f3"/><polygon points="1540.8,294.2 1540.8,301.8 1546.5,298" fill="#fff"/><circle cx="1543" cy="326" r="7" fill="#b3d8f6"/><polygon points="1540.8,322.2 1540.8,329.8 1546.5,326" fill="#fff"/><circle cx="1543" cy="354" r="7" fill="#2196f3"/><polygon points="1540.8,350.2 1540.8,357.8 1546.5,354" fill="#fff"/><circle cx="1543" cy="382" r="7" fill="#2196f3"/><polygon points="1540.8,378.2 1540.8,385.8 1546.5,382" fill="#fff"/></svg><svg style="position:absolute;left:30px;top:846px" width="22" height="22" viewBox="30 846 22 22"><polygon points="33,849 45,855.3 41,857.5 37.6,861.6" fill="#ececec" stroke="#bdbdbd" stroke-width="0.5"/>
<polygon points="33,849 42,857 41,858.5" fill="#8e8e8e"/>
<path d="M41.6 857.6 A3.8 3.8 0 1 0 45.2 856.7" fill="none" stroke="#3f56c4" stroke-width="1.4"/></svg><svg style="position:absolute;left:144px;top:851px" width="12" height="13" viewBox="144 851 12 13"><path d="M146.6 854.5 L152.4 860.3 M152.4 854.5 L146.6 860.3" stroke="#2b3f9b" stroke-width="2.3" stroke-linecap="butt"/></svg><svg style="position:absolute;left:168px;top:846px" width="18" height="22" viewBox="168 846 18 22"><path d="M171.5 849.5 L179.5 849.5 L183 853 L183 864.5 L171.5 864.5 Z" fill="#eef2f8" stroke="#6e8494" stroke-width="1"/><path d="M179.5 849.5 L179.5 853 L183 853" fill="#c9d3dc" stroke="#6e8494" stroke-width="0.8"/></svg><svg style="position:absolute;left:289px;top:851px" width="12" height="13" viewBox="289 851 12 13"><path d="M291.6 854.5 L297.4 860.3 M297.4 854.5 L291.6 860.3" stroke="#2b3f9b" stroke-width="2.3" stroke-linecap="butt"/></svg><svg style="position:absolute;left:314px;top:846px" width="18" height="22" viewBox="314 846 18 22"><rect x="317.7" y="851" width="11" height="13.3" rx="1" fill="#fff" stroke="#4f5f6b" stroke-width="1.1"/>
<rect x="320.5" y="849.8" width="5.5" height="2.6" rx="1" fill="#9aabb5"/>
<polyline points="319.6,857.8 322.2,860.5 326.6,855.5" fill="none" stroke="#3ab54a" stroke-width="1.5"/></svg><svg style="position:absolute;left:441px;top:851px" width="12" height="13" viewBox="441 851 12 13"><path d="M443.6 854.5 L449.4 860.3 M449.4 854.5 L443.6 860.3" stroke="#2b3f9b" stroke-width="2.3" stroke-linecap="butt"/></svg><svg style="position:absolute;left:464px;top:846px" width="20" height="22" viewBox="464 846 20 22"><path d="M467.5 849.2 L474.5 849.2 L477 851.7 L477 861.8 L467.5 861.8 Z" fill="#fff" stroke="#6e8494" stroke-width="1"/>
<rect x="469" y="850.8" width="4" height="1" fill="#9acd32"/>
<rect x="469" y="853" width="1" height="1" fill="#7890a0"/><rect x="471" y="853" width="1" height="1" fill="#7890a0"/><rect x="473" y="853" width="2" height="1" fill="#7890a0"/>
<rect x="469" y="855" width="1" height="1" fill="#b5472a"/><rect x="471" y="855" width="1" height="1" fill="#b5472a"/><rect x="473" y="855" width="2" height="1" fill="#b5472a"/>
<circle cx="477.5" cy="860.4" r="4.6" fill="#f5a900"/><circle cx="477.5" cy="860.4" r="3.3" fill="#fbc92a"/>
<path d="M478.8 858 Q476 857.8 476 860.4 Q476 863 478.8 862.8" fill="none" stroke="#f09000" stroke-width="0.9"/></svg><svg style="position:absolute;left:635px;top:851px" width="12" height="13" viewBox="635 851 12 13"><path d="M637.6 854.5 L643.4 860.3 M643.4 854.5 L637.6 860.3" stroke="#2b3f9b" stroke-width="2.3" stroke-linecap="butt"/></svg><svg style="position:absolute;left:660px;top:846px" width="20" height="22" viewBox="660 846 20 22"><path d="M662.8 864.8 Q663.0 859.8 667.0 859.0999999999999 L671.0 859.0999999999999 Q675.0 859.8 675.2 864.8 Z" fill="#546e7a"/><polygon points="668.0,859.3 670.0,859.3 669.8,863.3 668.2,863.3" fill="#ef7a85"/><rect x="667.2" y="856.8" width="3.6" height="2.6" fill="#f08c00"/><ellipse cx="669" cy="854.3" rx="3.8" ry="4.3" fill="#ffb340"/><path d="M665.0 853.8 Q665.0 848.8 669 848.8 Q673.0 848.8 673.0 853.8 Q671.0 851.3 667.0 851.8 Q665.5 852.3 665.0 853.8 Z" fill="#37474f"/></svg><svg style="position:absolute;left:897px;top:851px" width="12" height="13" viewBox="897 851 12 13"><path d="M899.6 854.5 L905.4 860.3 M905.4 854.5 L899.6 860.3" stroke="#2b3f9b" stroke-width="2.3" stroke-linecap="butt"/></svg><svg style="position:absolute;left:920px;top:846px" width="20" height="22" viewBox="920 846 20 22"><rect x="926" y="848.8" width="10" height="13" fill="#c8c8c8"/><rect x="927.0" y="850.3" width="2" height="1.2" fill="#1e90ff"/><rect x="930.0" y="850.3" width="2" height="1.2" fill="#1e90ff"/><rect x="933.0" y="850.3" width="2" height="1.2" fill="#1e90ff"/><rect x="927.0" y="852.4" width="2" height="1.2" fill="#1e90ff"/><rect x="930.0" y="852.4" width="2" height="1.2" fill="#1e90ff"/><rect x="933.0" y="852.4" width="2" height="1.2" fill="#1e90ff"/><rect x="927.0" y="854.5" width="2" height="1.2" fill="#1e90ff"/><rect x="930.0" y="854.5" width="2" height="1.2" fill="#1e90ff"/><rect x="933.0" y="854.5" width="2" height="1.2" fill="#1e90ff"/><rect x="927.0" y="856.6" width="2" height="1.2" fill="#1e90ff"/><rect x="930.0" y="856.6" width="2" height="1.2" fill="#1e90ff"/><rect x="933.0" y="856.6" width="2" height="1.2" fill="#1e90ff"/><rect x="927.0" y="858.7" width="2" height="1.2" fill="#1e90ff"/><rect x="930.0" y="858.7" width="2" height="1.2" fill="#1e90ff"/><rect x="933.0" y="858.7" width="2" height="1.2" fill="#1e90ff"/><path d="M923.284 864.88 Q923.42 861.48 926.14 861.004 L928.86 861.004 Q931.58 861.48 931.716 864.88 Z" fill="#3f51b5"/><polygon points="926.82,861.14 928.18,861.14 928.044,863.86 926.956,863.86" fill="#e53935"/><rect x="926.276" y="859.44" width="2.4480000000000004" height="1.7680000000000002" fill="#f08c00"/><ellipse cx="927.5" cy="857.74" rx="2.584" ry="2.924" fill="#ffb340"/><path d="M924.78 857.4 Q924.78 854 927.5 854 Q930.22 854 930.22 857.4 Q928.86 855.7 926.14 856.04 Q925.12 856.38 924.78 857.4 Z" fill="#37474f"/></svg><svg style="position:absolute;left:1165px;top:851px" width="12" height="13" viewBox="1165 851 12 13"><path d="M1167.6 854.5 L1173.4 860.3 M1173.4 854.5 L1167.6 860.3" stroke="#2b3f9b" stroke-width="2.3" stroke-linecap="butt"/></svg><svg style="position:absolute;left:1195px;top:850px" width="15" height="16" viewBox="1195 850 15 16"><rect x="1198.5" y="858" width="8" height="1.1" fill="#5a5a5a"/><rect x="1201.95" y="854.5" width="1.1" height="8" fill="#5a5a5a"/></svg><svg style="position:absolute;left:843px;top:825px" width="38" height="12" viewBox="843 825 38 12"><polyline points="847,829 850.5,832.5 854,829" fill="none" stroke="#2e3f9a" stroke-width="1.6"/>
<polyline points="870,833 873.5,829.5 877,833" fill="none" stroke="#2e3f9a" stroke-width="1.6"/></svg><svg style="position:absolute;left:2px;top:821px" width="16" height="16" viewBox="2 821 16 16"><circle cx="10" cy="829" r="6" fill="#e53935"/><text x="10" y="832.3" font-family="Liberation Sans" font-weight="bold" font-size="9" fill="#fff" text-anchor="middle">2</text></svg><svg style="position:absolute;left:1675px;top:838px" width="26" height="33" viewBox="1675 838 26 33"><polyline points="1680.5,847.8 1683.8,843.3 1687,847.8" fill="none" stroke="#505050" stroke-width="2.3"/>
<polyline points="1680.5,861.2 1683.8,865.7 1687,861.2" fill="none" stroke="#505050" stroke-width="2.3"/>
<polyline points="1698.5,851 1695.5,854.5 1698.5,858" fill="none" stroke="#2e3f9a" stroke-width="1.3"/></svg>

</body></html>
